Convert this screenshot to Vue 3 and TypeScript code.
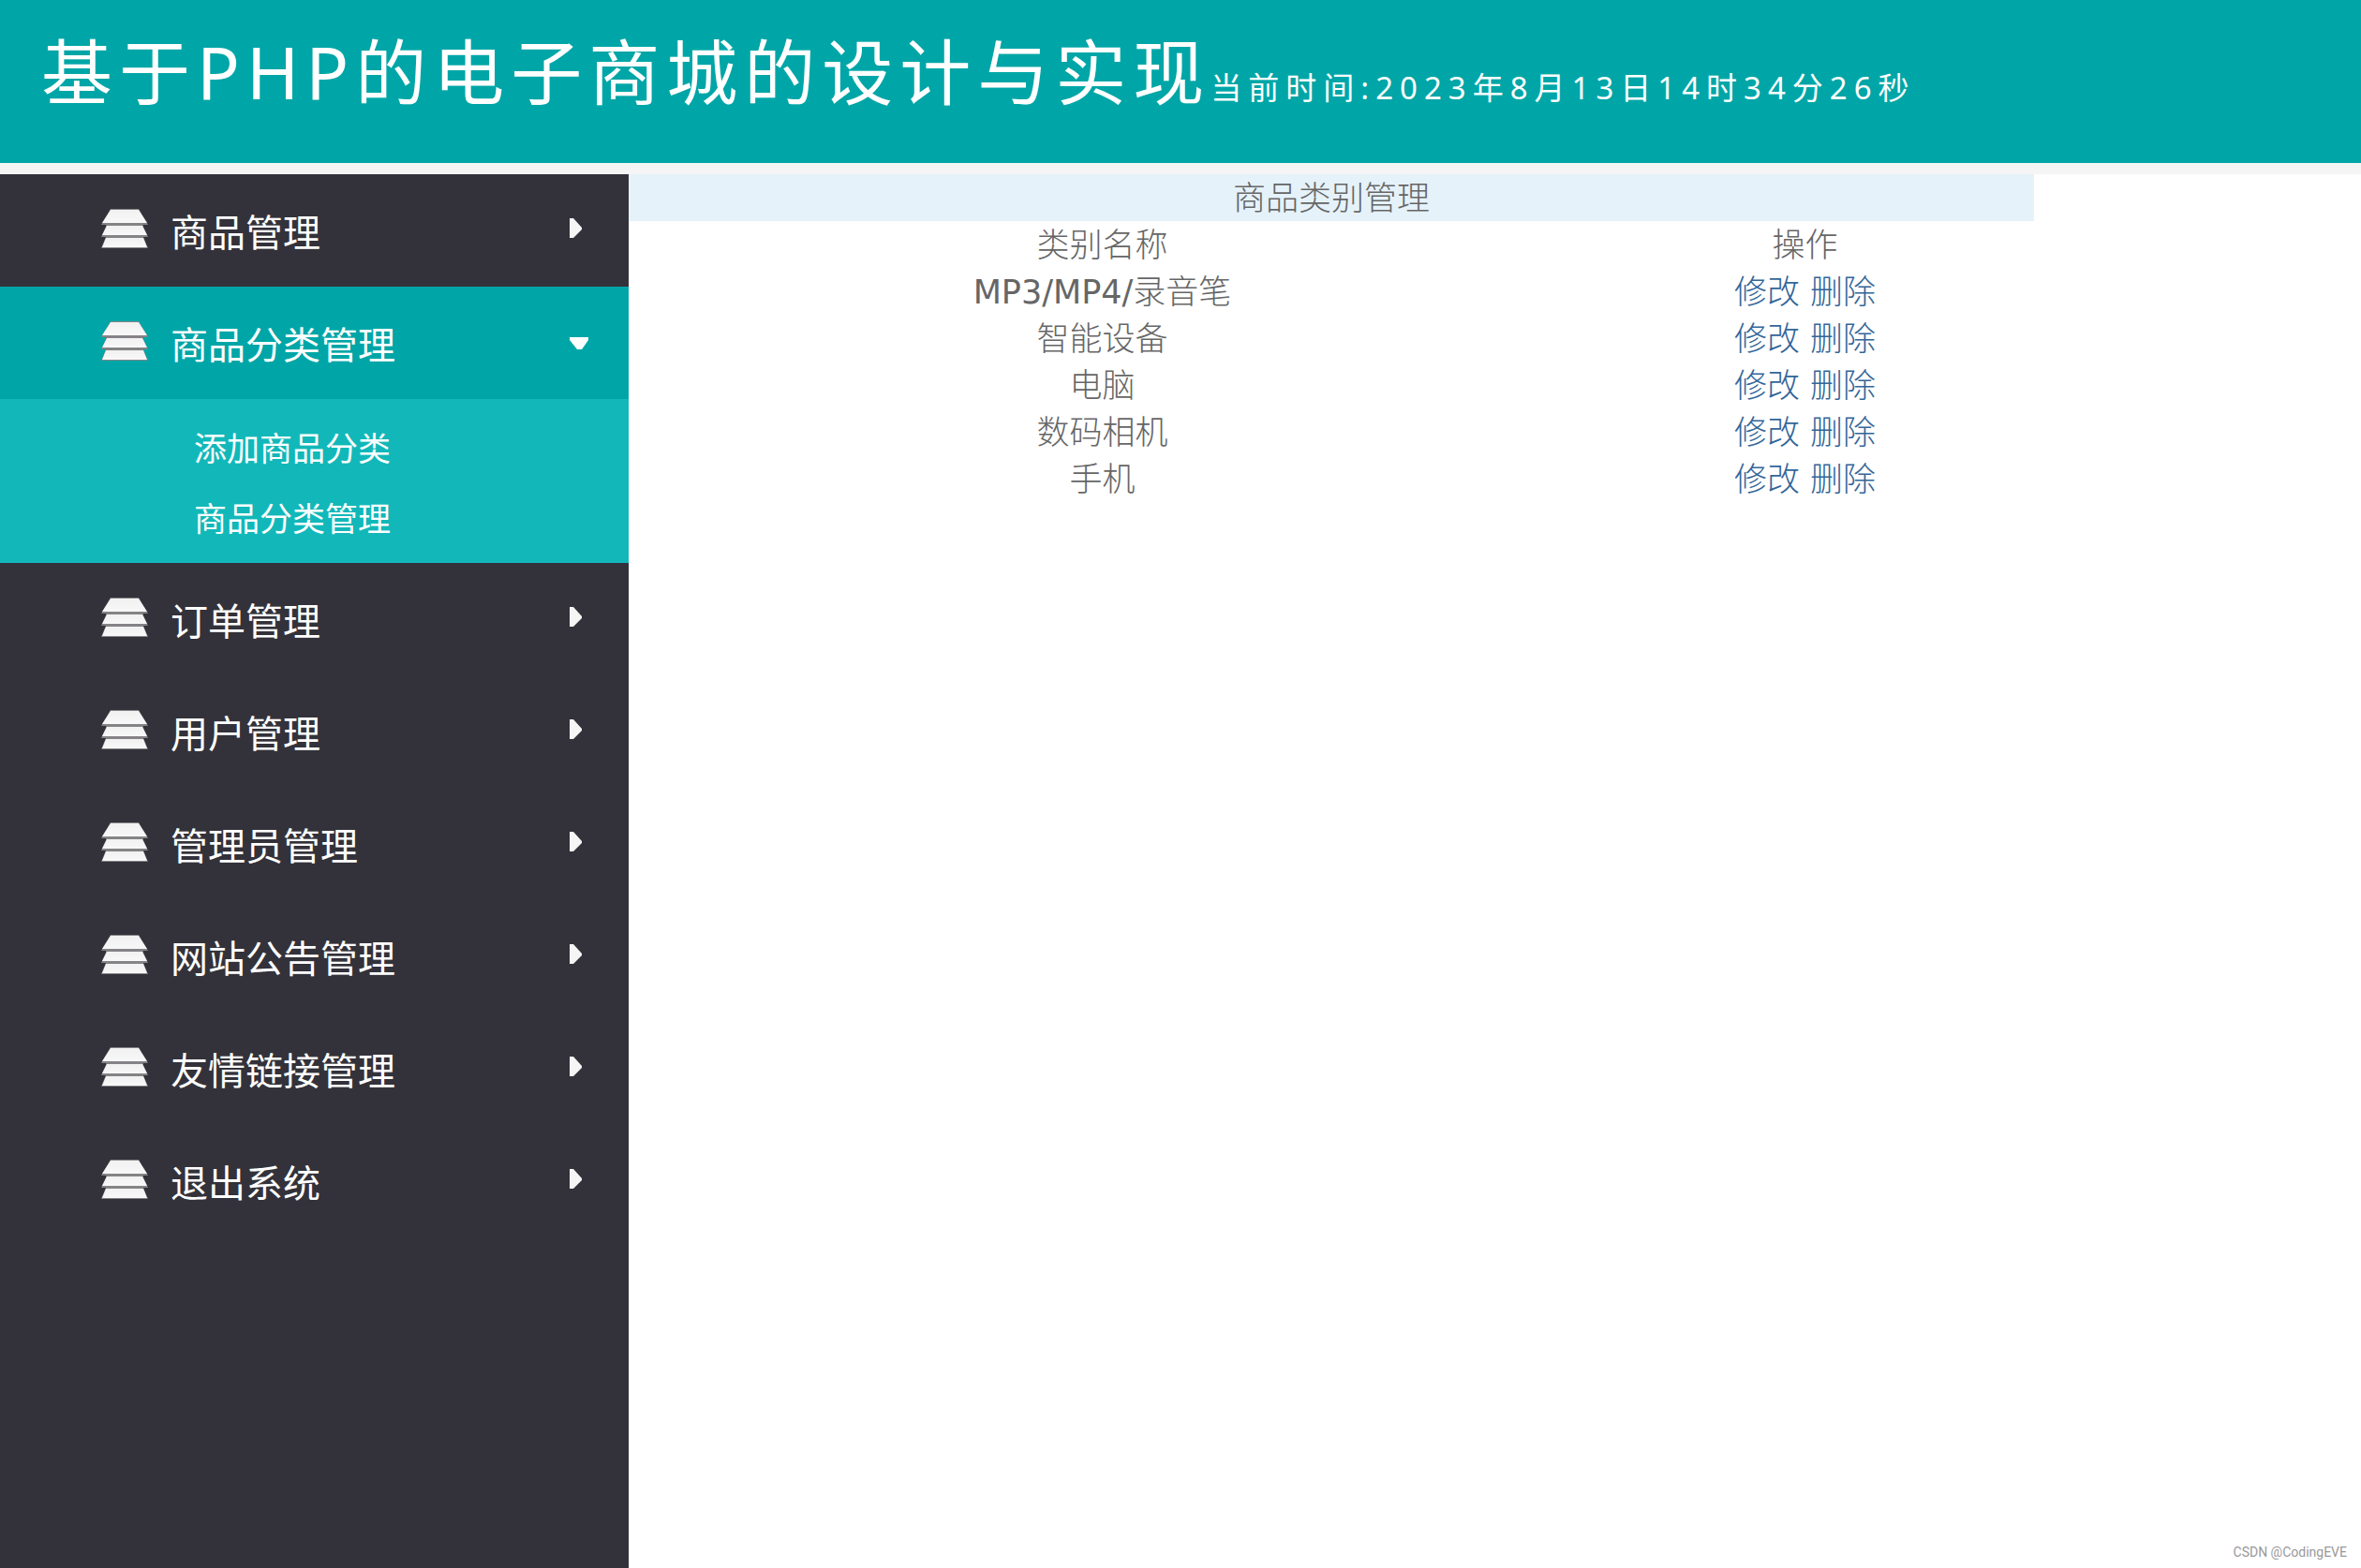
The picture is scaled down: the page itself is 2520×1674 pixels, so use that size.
<script setup lang="ts">
import { ref } from 'vue'

interface MenuItem {
  name: string
  children: string[]
}

interface Category {
  model?: string
  name: string
}

const menu: MenuItem[] = [
  { name: '商品管理', children: [] },
  { name: '商品分类管理', children: ['添加商品分类', '商品分类管理'] },
  { name: '订单管理', children: [] },
  { name: '用户管理', children: [] },
  { name: '管理员管理', children: [] },
  { name: '网站公告管理', children: [] },
  { name: '友情链接管理', children: [] },
  { name: '退出系统', children: [] },
]

const categories: Category[] = [
  { model: 'MP3/MP4/', name: '录音笔' },
  { name: '智能设备' },
  { name: '电脑' },
  { name: '数码相机' },
  { name: '手机' },
]

const openIndex = ref<number>(1)

function toggle(index: number): void {
  openIndex.value = openIndex.value === index ? -1 : index
}
</script>

<template>
  <div class="shell">
    <header class="header">
      <h1 class="title">基于PHP的电子商城的设计与实现</h1>
      <span class="clock">当前时间:2023年8月13日14时34分26秒</span>
    </header>

    <div class="body">
      <nav class="sidebar">
        <template v-for="(item, index) in menu" :key="item.name">
          <button
            type="button"
            class="menu-item"
            :class="{ open: openIndex === index }"
            :aria-expanded="openIndex === index"
            @click="toggle(index)"
          >
            <svg class="stack" viewBox="0 0 50 42" aria-hidden="true">
              <defs>
                <linearGradient id="sheet" x1="0" y1="0" x2="0" y2="1">
                  <stop offset="0" stop-color="#f1f1f1" />
                  <stop offset="1" stop-color="#f8f8f8" />
                </linearGradient>
              </defs>
              <path d="M5 15H45V32H5Z" fill="#6f6d71" />
              <path d="M10 0H40L50 17H0Z" fill="#858386" />
              <path d="M6 17H44L50 30H0Z" fill="#858386" />
              <path d="M5 30H45L50 42H0Z" fill="#858386" />
              <path d="M10 1H40L49 15H1Z" fill="url(#sheet)" />
              <path d="M6 18H44L49 28H1Z" fill="url(#sheet)" />
              <path d="M5 31H45L49 41H1Z" fill="url(#sheet)" />
            </svg>
            <span class="label">{{ item.name }}</span>
            <svg class="arrow" viewBox="0 0 20 22" aria-hidden="true">
              <path v-if="openIndex === index" d="M0 7H20V10L13 20H8L0 10Z" fill="#fff" />
              <path v-else d="M0 0H4L13 10V12L4 21H0Z" fill="#f5f5f5" />
            </svg>
          </button>
          <ul v-if="openIndex === index && item.children.length" class="submenu">
            <li v-for="child in item.children" :key="child">
              <a href="#">{{ child }}</a>
            </li>
          </ul>
        </template>
      </nav>

      <main class="content">
        <table class="grid">
          <colgroup>
            <col class="col-name" />
            <col />
          </colgroup>
          <thead>
            <tr class="caption">
              <th colspan="2">商品类别管理</th>
            </tr>
            <tr>
              <th>类别名称</th>
              <th>操作</th>
            </tr>
          </thead>
          <tbody>
            <tr v-for="item in categories" :key="item.name">
              <td><span v-if="item.model" class="model">{{ item.model }}</span>{{ item.name }}</td>
              <td><a href="#">修改</a> <a href="#">删除</a></td>
            </tr>
          </tbody>
        </table>
      </main>
    </div>

    <small class="credit">CSDN @CodingEVE</small>
  </div>
</template>

<style>
body {
  margin: 0;
  background: #fff;
}
</style>

<style scoped>
.shell {
  position: relative;
  display: flex;
  flex-direction: column;
  min-height: 100vh;
  font-family: 'Noto Sans', 'Noto Sans CJK SC', sans-serif;
}

.header {
  display: flex;
  align-items: baseline;
  height: 174px;
  padding-left: 44px;
  border-bottom: 12px solid #f5f5f5;
  background: #00a6a7;
  color: #fff;
  letter-spacing: 7px;
  white-space: nowrap;
}

.title {
  margin: 0;
  font-size: 76px;
  font-weight: 400;
  line-height: 154px;
}

.clock {
  font-size: 33px;
}

.body {
  display: flex;
  flex: 1;
}

.sidebar {
  flex: 0 0 671px;
  background: #33323a;
}

.menu-item {
  display: flex;
  align-items: center;
  box-sizing: border-box;
  width: 100%;
  height: 120px;
  padding: 0 43px 0 108px;
  border: 0;
  background: transparent;
  color: #fff;
  font: inherit;
  font-size: 40px;
  text-align: left;
  cursor: pointer;
}

.menu-item.open {
  background: #00a6a7;
}

.stack,
.arrow {
  margin-bottom: 4px;
}

.stack {
  width: 50px;
  height: 42px;
  margin-right: 24px;
}

.label {
  flex: 1;
}

.arrow {
  width: 20px;
  height: 22px;
}

.submenu {
  margin: 0;
  padding: 15px 0 10px 207px;
  background: #12b8b9;
  list-style: none;
}

.submenu a {
  display: block;
  color: #fff;
  font-size: 35px;
  line-height: 75px;
  text-decoration: none;
}

.content {
  flex: 1;
}

.grid {
  width: 100%;
  max-width: 1500px;
  border-collapse: collapse;
  table-layout: fixed;
  color: #666;
  font-family: 'DejaVu Sans', 'Noto Sans CJK SC', sans-serif;
  font-size: 35px;
  font-weight: 300;
  line-height: 48px;
  text-align: center;
}

.col-name {
  width: 67.4%;
}

.grid th,
.grid td {
  padding: 2px 0 0;
  font-weight: inherit;
}

.model {
  font-weight: 400;
}

.caption {
  background: #e5f2fa;
}

.grid a {
  color: #336699;
  text-decoration: none;
}

.credit {
  position: absolute;
  right: 15px;
  bottom: 9px;
  color: #999;
  font-family: Roboto, sans-serif;
  font-size: 14px;
  line-height: 16px;
}
</style>
